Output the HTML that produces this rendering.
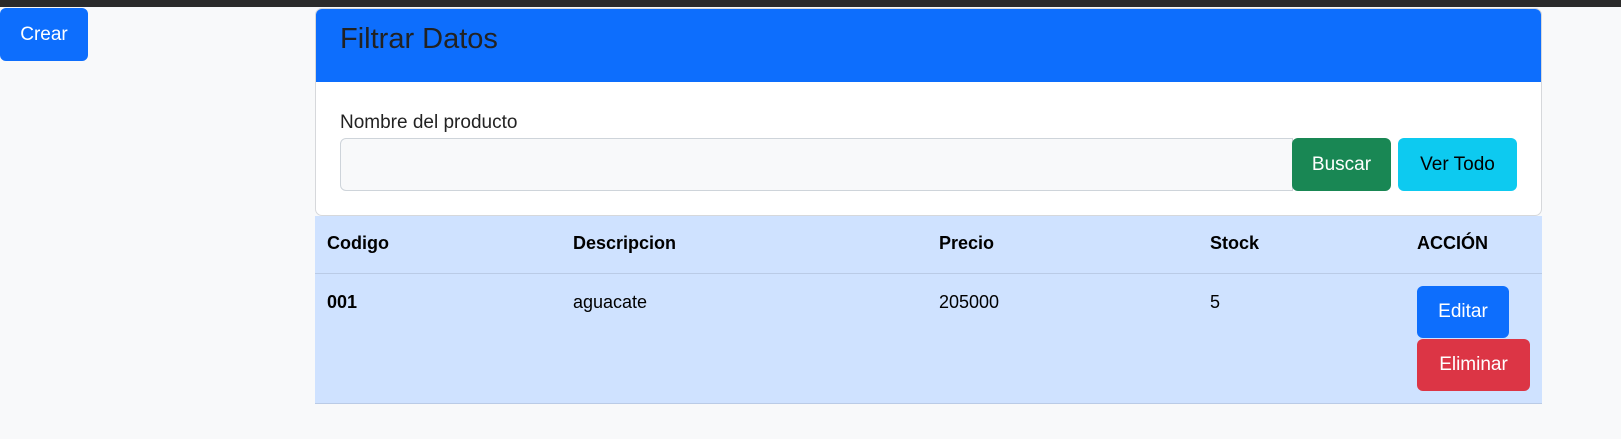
<!DOCTYPE html>
<html><head><meta charset="utf-8"><style>
*{box-sizing:border-box;margin:0;padding:0}
body{width:1621px;height:439px;background:#f8f9fa;font-family:"Liberation Sans",sans-serif;position:relative;overflow:hidden;color:#212529}
.a{position:absolute}
.btn{position:absolute;border-radius:6px;font-size:19px;display:flex;align-items:center;justify-content:center;color:#fff}
.t{position:absolute;font-size:18px;color:#000}
</style></head><body>
<div class="a" style="left:0;top:0;width:1621px;height:7px;background:#2b2b2b"></div>
<div class="btn" style="left:0;top:8px;width:88px;height:53px;background:#0d6efd">Crear</div>
<div class="a" style="left:315px;top:8px;width:1227px;height:208px;background:#fff;border:1px solid #d6d8db;border-radius:7px;overflow:hidden">
 <div class="a" style="left:0;top:0;width:100%;height:73px;background:#0d6efd"></div>
 <div class="a" style="left:24px;top:14px;font-size:29px;color:#222">Filtrar Datos</div>
 <div class="a" style="left:24px;top:103px;font-size:19px;color:#222">Nombre del producto</div>
 <div class="a" style="left:24px;top:129px;width:953px;height:53px;background:#f8f9fa;border:1px solid #ced4da;border-radius:6px 0 0 6px"></div>
</div>
<div class="btn" style="left:1292px;top:138px;width:99px;height:53px;background:#198754">Buscar</div>
<div class="btn" style="left:1398px;top:138px;width:119px;height:53px;background:#0dcaf0;color:#000">Ver Todo</div>
<div class="a" style="left:315px;top:216px;width:1227px;height:188px;background:#cfe2ff;border-bottom:1px solid #bacbe6"></div>
<div class="a" style="left:315px;top:273px;width:1227px;height:1px;background:#bacbe6"></div>
<div class="t" style="left:327px;top:233px;font-weight:bold">Codigo</div>
<div class="t" style="left:573px;top:233px;font-weight:bold">Descripcion</div>
<div class="t" style="left:939px;top:233px;font-weight:bold">Precio</div>
<div class="t" style="left:1210px;top:233px;font-weight:bold">Stock</div>
<div class="t" style="left:1417px;top:233px;font-weight:bold">ACCIÓN</div>
<div class="t" style="left:327px;top:292px;font-weight:bold">001</div>
<div class="t" style="left:573px;top:292px">aguacate</div>
<div class="t" style="left:939px;top:292px">205000</div>
<div class="t" style="left:1210px;top:292px">5</div>
<div class="btn" style="left:1417px;top:286px;width:92px;height:52px;background:#0d6efd">Editar</div>
<div class="btn" style="left:1417px;top:339px;width:113px;height:52px;background:#dc3545">Eliminar</div>
</body></html>
